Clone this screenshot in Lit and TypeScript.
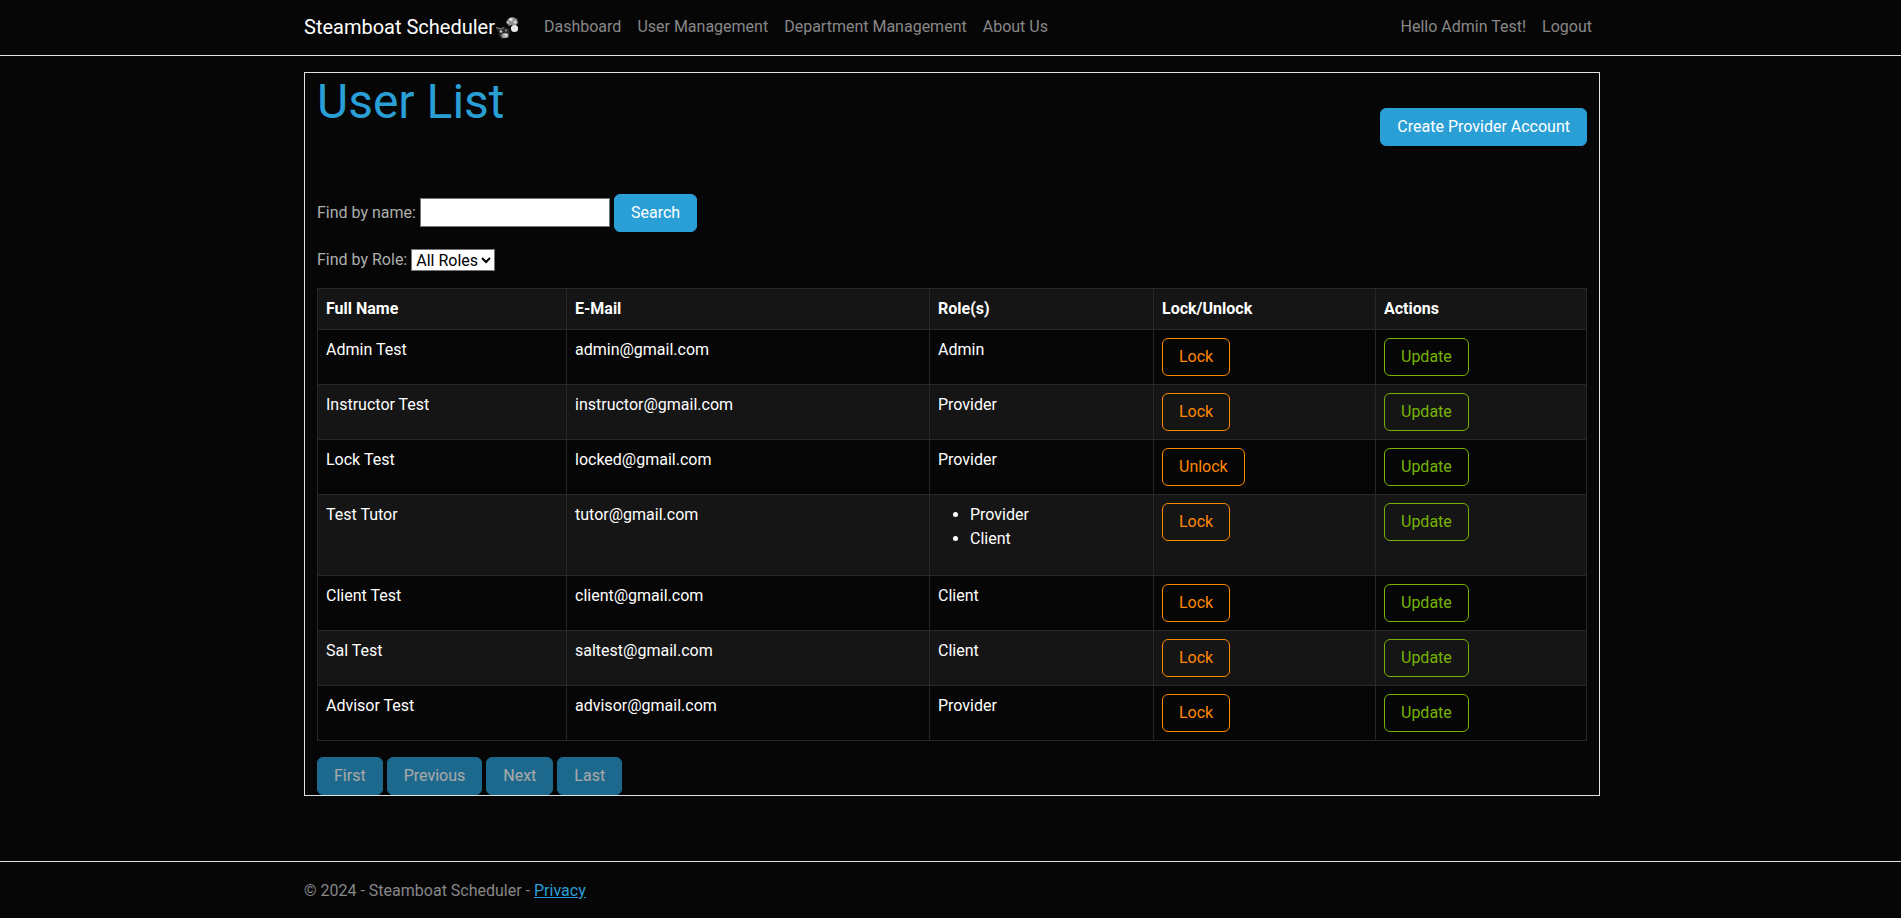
import { LitElement, html, css } from "lit";
import { customElement } from "lit/decorators.js";

interface User { name: string; email: string; roles: string[]; lock: string; }
const USERS: User[] = [
  { name: "Admin Test", email: "admin@gmail.com", roles: ["Admin"], lock: "Lock" },
  { name: "Instructor Test", email: "instructor@gmail.com", roles: ["Provider"], lock: "Lock" },
  { name: "Lock Test", email: "locked@gmail.com", roles: ["Provider"], lock: "Unlock" },
  { name: "Test Tutor", email: "tutor@gmail.com", roles: ["Provider", "Client"], lock: "Lock" },
  { name: "Client Test", email: "client@gmail.com", roles: ["Client"], lock: "Lock" },
  { name: "Sal Test", email: "saltest@gmail.com", roles: ["Client"], lock: "Lock" },
  { name: "Advisor Test", email: "advisor@gmail.com", roles: ["Provider"], lock: "Lock" },
];

@customElement("app-root")
export class AppRoot extends LitElement {
  static styles = css`
    :host { display: block; height: 918px; overflow: hidden; background: #060606; color: #adafae; font-family: Roboto, sans-serif; font-size: 16px; line-height: 24px; }
    * { box-sizing: border-box; }
    a { text-decoration: none; }
    .wrap { width: 1296px; margin-left: 304px; }
    .topbar { height: 56px; border-bottom: 1px solid #dee2e6; margin-bottom: 16px; }
    .nav { display: flex; align-items: center; height: 53px; }
    .brand { color: #fff; font-size: 20px; line-height: 30px; display: flex; align-items: center; margin-right: 16.5px; }
    .logo { width: 24px; height: 24px; flex: none; margin-top: 2px; margin-left: 0.5px; }
    .link { color: #888; padding: 8px; display: block; }
    .spacer { flex: 1; }
    .box { border: 1px solid #dee2e6; padding: 0 12px; height: 724px; }
    .head { display: flex; justify-content: space-between; height: 121px; }
    h1 { margin: 0; color: #2a9fd6; font-weight: 400; font-size: 48px; line-height: 58px; }
    .btn { display: inline-block; font: inherit; font-size: 16px; line-height: 24px; padding: 6px 16px; border: 1px solid transparent; border-radius: 6px; background: transparent; }
    .primary { background: #2a9fd6; border-color: #2a9fd6; color: #fff; }
    .create { margin-top: 35px; align-self: flex-start; }
    .row { display: flex; align-items: center; gap: 4px; }
    .r1 { height: 38px; margin-bottom: 16px; }
    .r2 { height: 24px; margin-bottom: 16px; }
    input { width: 190px; height: 29px; margin-bottom: 1px; background: #fff; border: 1px solid #767676; padding: 1px 2px; font: 13.3px Roboto, sans-serif; border-radius: 0; }
    select { height: 22px; width: 84px; background: #fff; color: #000; font: 16px/20px Roboto, sans-serif; border: 1px solid #767676; border-radius: 0; padding: 0; }
    table { width: 100%; border-collapse: collapse; table-layout: fixed; color: #fff; margin-bottom: 16px; }
    col.c1 { width: 249px; } col.c2 { width: 363px; } col.c3 { width: 224px; } col.c4 { width: 222px; }
    th, td { border: 1px solid #282828; padding: 8px; text-align: left; vertical-align: top; }
    th { font-weight: 700; background: #151515; }
    tbody tr:nth-child(even) td { background: #151515; }
    ul { margin: 0 0 16px; padding-left: 32px; }
    .warn { border-color: #f80; color: #f80; }
    .ok { border-color: #77b300; color: #77b300; }
    .pager { display: flex; gap: 4px; }
    .pager .btn { background: #2a9fd6; border-color: #2a9fd6; color: #fff; opacity: .65; }
    .footer { margin-top: 65px; border-top: 1px solid #dee2e6; height: 57px; padding-top: 17px; color: #888; }
    .footer a { color: #2a9fd6; text-decoration: underline; }
  `;

  private logo() {
    return html`<svg class="logo" viewBox="0 0 24 24" aria-hidden="true">
      <path d="M11 6l3-4 4-1 4 2 1 4-3 3-3-1-3 1z" fill="#8c8c8c"/>
      <circle cx="16" cy="3.5" r="1.8" fill="#e0e0e0"/>
      <circle cx="20" cy="6" r="1.7" fill="#cfcfcf"/>
      <circle cx="13" cy="6.5" r="1.2" fill="#bdbdbd"/>
      <circle cx="19.5" cy="12.5" r="3.6" fill="#e8e8e8"/>
      <path d="M1 11.5l5 .5 3-1 5 2 1 5-3 4-5 1-3-3-1-5z" fill="#2c2c2c"/>
      <path d="M1 11.5l5 1.5 3-1.5" stroke="#8a8a8a" stroke-width="1" fill="none"/>
      <ellipse cx="10" cy="19.5" rx="3.6" ry="2.6" fill="#a8a8a8"/>
      <circle cx="11" cy="19" r="1.3" fill="#ddd"/>
      <circle cx="6" cy="15.5" r="1.2" fill="#d0d0d0"/>
      <circle cx="11" cy="14.5" r="1.1" fill="#909090"/>
      <circle cx="7" cy="20" r="0.9" fill="#777"/>
    </svg>`;
  }

  render() {
    return html`
      <div class="topbar">
        <div class="wrap nav">
          <a class="brand" href="#">Steamboat Scheduler${this.logo()}</a>
          <a class="link" href="#">Dashboard</a>
          <a class="link" href="#">User Management</a>
          <a class="link" href="#">Department Management</a>
          <a class="link" href="#">About Us</a>
          <span class="spacer"></span>
          <a class="link" href="#">Hello Admin Test!</a>
          <a class="link" href="#">Logout</a>
        </div>
      </div>
      <div class="wrap box">
        <div class="head">
          <h1>User List</h1>
          <button class="btn primary create">Create Provider Account</button>
        </div>
        <div class="row r1"><span>Find by name:</span><input type="text" /><button class="btn primary">Search</button></div>
        <div class="row r2"><span>Find by Role:</span><select><option>All Roles</option></select></div>
        <table>
          <colgroup><col class="c1" /><col class="c2" /><col class="c3" /><col class="c4" /><col /></colgroup>
          <thead><tr><th>Full Name</th><th>E-Mail</th><th>Role(s)</th><th>Lock/Unlock</th><th>Actions</th></tr></thead>
          <tbody>
            ${USERS.map((u) => html`<tr>
              <td>${u.name}</td>
              <td>${u.email}</td>
              <td>${u.roles.length > 1 ? html`<ul>${u.roles.map((r) => html`<li>${r}</li>`)}</ul>` : u.roles[0]}</td>
              <td><button class="btn warn">${u.lock}</button></td>
              <td><button class="btn ok">Update</button></td>
            </tr>`)}
          </tbody>
        </table>
        <div class="pager">
          <button class="btn">First</button><button class="btn">Previous</button><button class="btn">Next</button><button class="btn">Last</button>
        </div>
      </div>
      <div class="footer"><div class="wrap">© 2024 - Steamboat Scheduler - <a href="#">Privacy</a></div></div>
    `;
  }
}
